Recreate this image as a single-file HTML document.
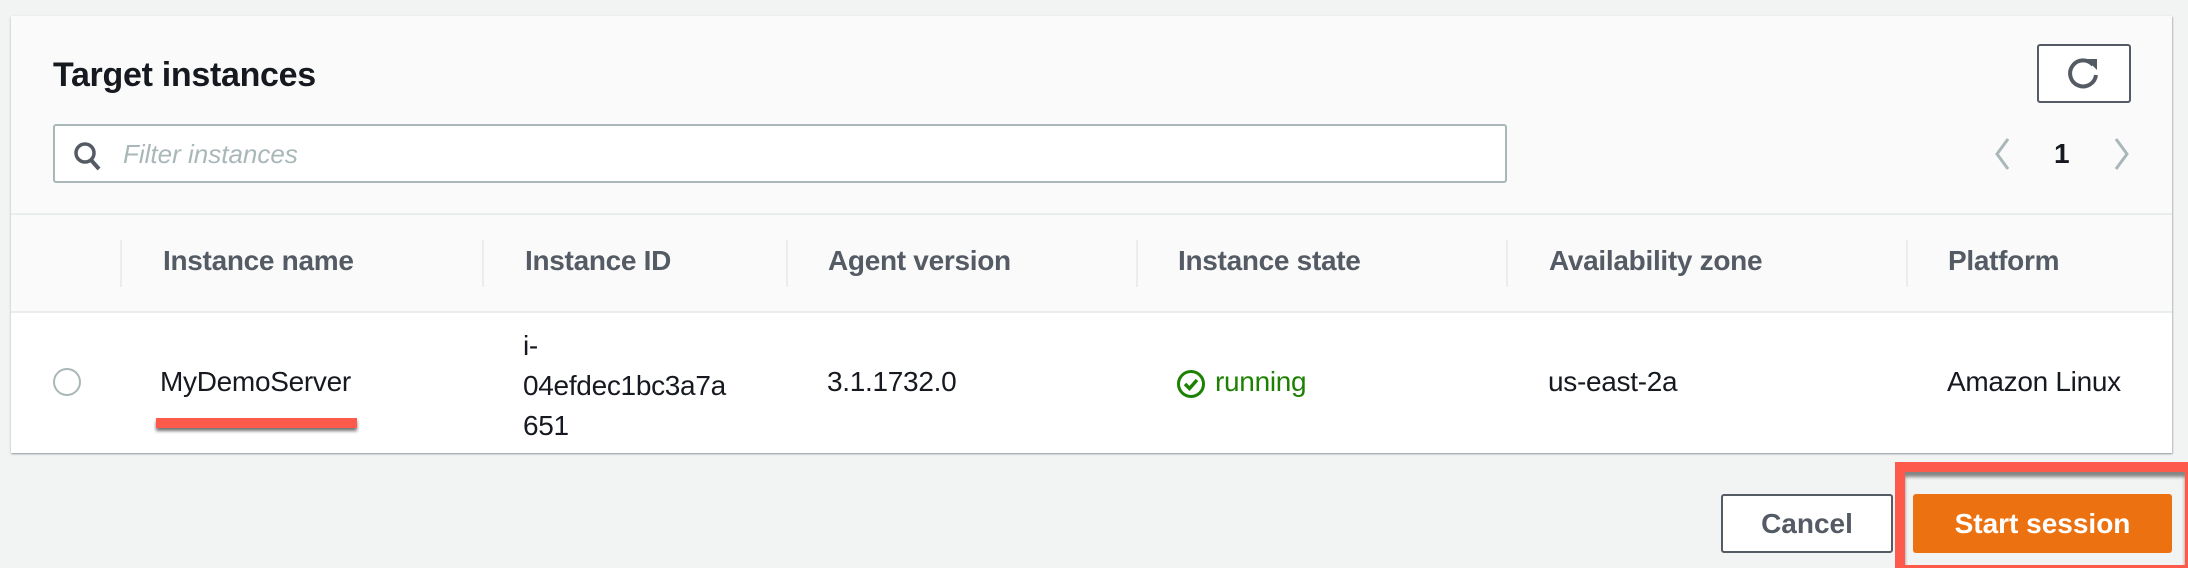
<!DOCTYPE html>
<html><head><meta charset="utf-8"><style>
*{margin:0;padding:0;box-sizing:border-box}
body{width:2188px;height:568px;background:#f2f3f3;font-family:"Liberation Sans",Arial,sans-serif;position:relative;overflow:hidden}
.a{position:absolute;white-space:nowrap}
.panel{position:absolute;left:11px;top:16px;width:2161px;height:437px;background:#fafafa;box-shadow:0 1px 2px rgba(0,28,36,.3),1px 1px 1px rgba(0,28,36,.15)}
.row{position:absolute;left:11px;top:313px;width:2161px;height:140px;background:#fff}
.hd{font-weight:bold;font-size:28px;color:#545b64;top:245px;letter-spacing:-0.3px}
.sep{position:absolute;top:240px;width:2px;height:47px;background:#eaeded}
.td{font-size:28px;color:#16191f;letter-spacing:-0.3px}
</style></head><body>
<div class="panel"></div>
<div class="row"></div>
<div class="a" style="left:11px;top:213px;width:2161px;height:2px;background:#eaeded"></div>
<div class="a" style="left:11px;top:311px;width:2161px;height:2px;background:#eaeded"></div>
<div class="a" style="left:53px;top:56px;font-size:34px;font-weight:bold;color:#16191f;letter-spacing:-0.3px">Target instances</div>
<div class="a" style="left:2037px;top:44px;width:94px;height:59px;border:2px solid #545b64;border-radius:3px;background:#fff"></div>
<svg class="a" style="left:2066px;top:56px" width="36" height="36" viewBox="0 0 36 36"><path d="M27 9 A13 13 0 1 0 30 19" fill="none" stroke="#545b64" stroke-width="4"/><path d="M20 3 L31 3 L31 14 Z" fill="#545b64"/></svg>
<div class="a" style="left:53px;top:124px;width:1454px;height:59px;border:2px solid #aab7b8;border-radius:3px;background:#fff"></div>
<svg class="a" style="left:73px;top:141px" width="32" height="30" viewBox="0 0 32 30"><circle cx="12" cy="12" r="9" fill="none" stroke="#545b64" stroke-width="3.5"/><path d="M18 19 L26 28" stroke="#545b64" stroke-width="4"/></svg>
<div class="a" style="left:123px;top:139px;font-size:26px;font-style:italic;color:#aab7b8">Filter instances</div>
<svg class="a" style="left:1990px;top:137px" width="24" height="34" viewBox="0 0 24 34"><path d="M18 2 L7 17 L18 32" fill="none" stroke="#aab7b8" stroke-width="3"/></svg>
<div class="a" style="left:2054px;top:138px;font-size:28px;font-weight:bold;color:#16191f">1</div>
<svg class="a" style="left:2110px;top:137px" width="24" height="34" viewBox="0 0 24 34"><path d="M6 2 L17 17 L6 32" fill="none" stroke="#aab7b8" stroke-width="3"/></svg>
<div class="sep" style="left:120px"></div><div class="sep" style="left:482px"></div><div class="sep" style="left:786px"></div><div class="sep" style="left:1136px"></div><div class="sep" style="left:1506px"></div><div class="sep" style="left:1906px"></div>
<div class="a hd" style="left:163px">Instance name</div>
<div class="a hd" style="left:525px">Instance ID</div>
<div class="a hd" style="left:828px">Agent version</div>
<div class="a hd" style="left:1178px">Instance state</div>
<div class="a hd" style="left:1549px">Availability zone</div>
<div class="a hd" style="left:1948px">Platform</div>
<div class="a" style="left:53px;top:368px;width:28px;height:28px;border:2px solid #aab7b8;border-radius:50%;background:#fff"></div>
<div class="a td" style="left:160px;top:366px">MyDemoServer</div>
<div class="a" style="left:156px;top:418px;width:201px;height:10px;background:#fd5a4c;box-shadow:0 3px 3px rgba(0,0,0,.55)"></div>
<div class="a td" style="left:523px;top:326px;line-height:40px;white-space:normal">i-<br>04efdec1bc3a7a<br>651</div>
<div class="a td" style="left:827px;top:366px">3.1.1732.0</div>
<svg class="a" style="left:1176px;top:369px" width="30" height="30" viewBox="0 0 30 30"><circle cx="15" cy="15" r="12.5" fill="none" stroke="#1d8102" stroke-width="3"/><path d="M9 15 L13.5 19.5 L21 11" fill="none" stroke="#1d8102" stroke-width="3.5"/></svg>
<div class="a" style="left:1215px;top:366px;font-size:28px;color:#1d8102;letter-spacing:-0.3px">running</div>
<div class="a td" style="left:1548px;top:366px">us-east-2a</div>
<div class="a td" style="left:1947px;top:366px">Amazon Linux</div>
<div class="a" style="left:1721px;top:494px;width:172px;height:59px;border:2px solid #545b64;border-radius:3px;background:#fff;font-size:28px;font-weight:bold;color:#545b64;text-align:center;line-height:55px">Cancel</div>
<div class="a" style="left:1895px;top:462px;width:293px;height:106px;border:10px solid #fd5a4c;border-right:3px solid #fd5a4c;border-bottom:3px solid #fd5a4c;box-shadow:inset 0 5px 3px rgba(0,0,0,.45)"></div>
<div class="a" style="left:1913px;top:494px;width:259px;height:59px;background:#ec7211;border-radius:3px;font-size:28px;font-weight:bold;color:#fff;text-align:center;line-height:59px">Start session</div>
</body></html>
